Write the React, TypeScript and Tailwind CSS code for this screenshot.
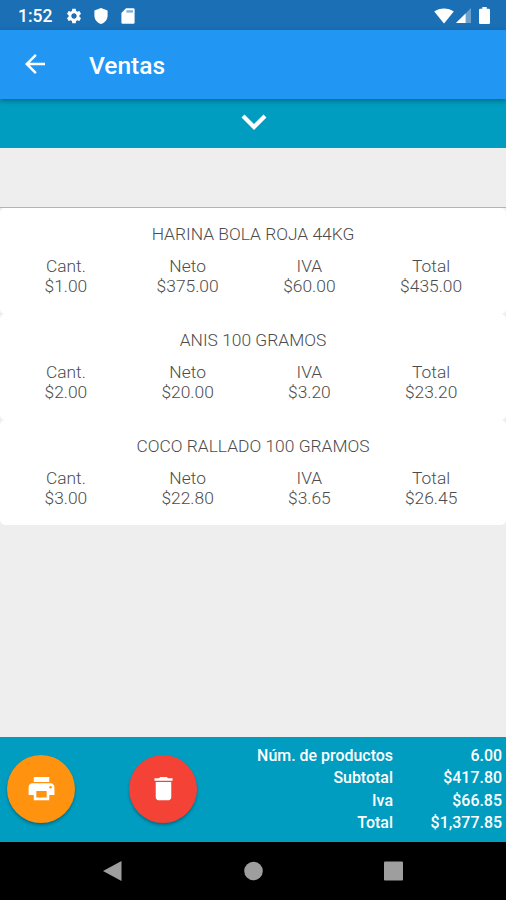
import React from "react";
import { MdArrowBack, MdDelete, MdPrint, MdSettings } from "react-icons/md";

const products = [
  { name: "HARINA BOLA ROJA 44KG", cant: "$1.00", neto: "$375.00", iva: "$60.00", total: "$435.00" },
  { name: "ANIS 100 GRAMOS", cant: "$2.00", neto: "$20.00", iva: "$3.20", total: "$23.20" },
  { name: "COCO RALLADO 100 GRAMOS", cant: "$3.00", neto: "$22.80", iva: "$3.65", total: "$26.45" },
];

const totals = [
  { label: "Núm. de productos", value: "6.00" },
  { label: "Subtotal", value: "$417.80" },
  { label: "Iva", value: "$66.85" },
  { label: "Total", value: "$1,377.85" },
];

function StatusBar() {
  return (
    <div className="flex h-[30px] shrink-0 items-center bg-[#1b6fb5] pl-[18px] pr-4 pt-px text-white">
      <span className="w-[47px] pt-[2px] text-[17.5px] font-medium leading-none">1:52</span>
      <MdSettings className="size-[18px]" />
      <svg viewBox="0 0 14 16" className="ml-[11px] h-4 w-3.5" fill="currentColor">
        <path d="M7 0 13.6 2.6V7.5C13.6 11.5 11 14.8 7 16 3 14.8.4 11.5.4 7.5V2.6Z" />
      </svg>
      <svg viewBox="0 0 14 16" className="ml-[13px] h-4 w-3.5" fill="currentColor">
        <path d="M5 .3H12.3Q13.6.3 13.6 1.6V14.4Q13.6 15.7 12.3 15.7H1.7Q.4 15.7.4 14.4V5Z" />
        <path d="M5.4 2.2H12V4.6H5.4Z" fill="#1b6fb5" opacity=".55" />
      </svg>
      <svg viewBox="0 0 20 16" className="ml-auto h-4 w-5" fill="currentColor">
        <path d="M10 15.5.2 3.6Q4.5.4 10 .4T19.8 3.6Z" />
      </svg>
      <svg viewBox="0 0 15 15" className="ml-[2px] size-[15px]" fill="currentColor">
        <path d="M15 0V15H0Z" opacity=".35" />
        <path d="M9.6 5.4V15H0Z" />
      </svg>
      <svg viewBox="0 0 11 17" className="ml-2 h-[17px] w-[11px]" fill="currentColor">
        <path d="M3.3 0H7.7V1.7H9.8Q11 1.7 11 2.9V15.8Q11 17 9.8 17H1.2Q0 17 0 15.8V2.9Q0 1.7 1.2 1.7H3.3Z" />
      </svg>
    </div>
  );
}

function Header() {
  return (
    <div className="relative flex h-[68.6px] shrink-0 items-center bg-[#2196f3] pl-[20px] text-white shadow-[0_2px_5px_rgba(0,0,0,0.3)]">
      <MdArrowBack className="size-[30px]" />
      <h1 className="ml-[39px] pt-[3px] text-[24.5px] font-medium leading-none">Ventas</h1>
    </div>
  );
}

function Field({ label, value }: { label: string; value: string }) {
  return (
    <div className="flex-1 text-center">
      <p>{label}</p>
      <p>{value}</p>
    </div>
  );
}

function App() {
  return (
    <div className="flex h-[900px] w-[506px] flex-col overflow-hidden bg-[#eeeeee] font-[Roboto,sans-serif]">
      <StatusBar />
      <Header />
      <div className="flex h-[49.4px] shrink-0 justify-center bg-[#009dc0] pl-px pt-[15.4px] text-white">
        <svg viewBox="0 0 26 16" className="h-4 w-[26px]" fill="none" stroke="currentColor" strokeWidth="4.2">
          <path d="M2 2 13 13 24 2" />
        </svg>
      </div>

      <div className="flex-1 pt-[59px]">
        <div className="border-t border-[#b4b4b4]">
          {products.map((product) => (
            <div
              key={product.name}
              className="h-[105.8px] rounded-[5px] bg-white pt-[17px] text-[17.4px] font-light leading-[19.7px] text-[#4c4c4c]">
              <p className="text-center">{product.name}</p>
              <div className="flex pl-[5px] pr-[14px] pt-[12.6px]">
                <Field label="Cant." value={product.cant} />
                <Field label="Neto" value={product.neto} />
                <Field label="IVA" value={product.iva} />
                <Field label="Total" value={product.total} />
              </div>
            </div>
          ))}
        </div>
      </div>

      <div className="flex h-[105px] shrink-0 items-center bg-[#009dc0] pl-[7px] pr-[4px] text-white">
        <button className="mb-[2px] flex size-[68px] items-center justify-center rounded-full bg-[#ff9310] shadow-[0_2px_3px_rgba(0,0,0,0.3)]">
          <MdPrint className="size-[31px]" />
        </button>
        <button className="mb-[2px] ml-[54px] flex size-[68px] items-center justify-center rounded-full bg-[#f44336] shadow-[0_2px_3px_rgba(0,0,0,0.3)]">
          <MdDelete className="size-[31px]" />
        </button>
        <div className="ml-auto text-right text-[15.95px] font-medium leading-[22.2px]">
          {totals.map((row) => (
            <div key={row.label} className="flex justify-end">
              <span>{row.label}</span>
              <span className="w-[109px]">{row.value}</span>
            </div>
          ))}
        </div>
      </div>

      <div className="flex h-[58px] shrink-0 items-center justify-center bg-black text-[#9e9e9e]">
        <svg viewBox="0 0 300 22" className="h-[22px] w-[300px]" fill="currentColor">
          <path d="M18.5 1V21L0 11Z" />
          <circle cx="150.5" cy="11" r="9.3" />
          <rect x="281" y="1.5" width="19" height="19" rx="1" />
        </svg>
      </div>
    </div>
  );
}

export default App;
